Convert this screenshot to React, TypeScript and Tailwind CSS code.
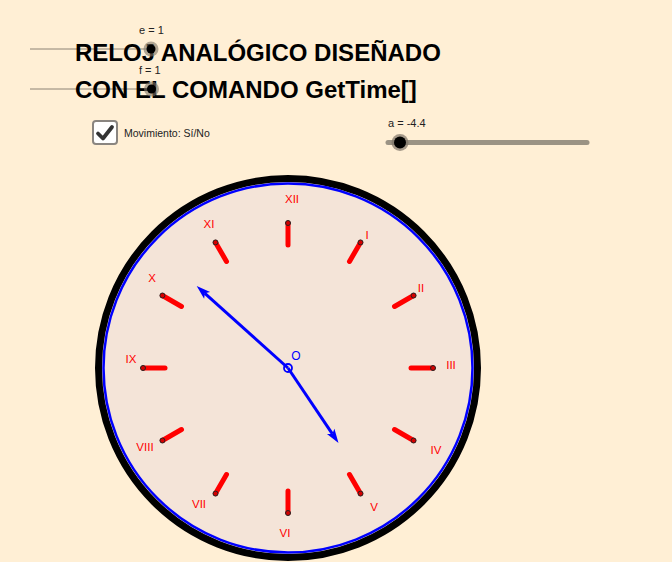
import React from "react";

const cx = 288;
const cy = 368;

const labels: [string, number, number][] = [
  ["XII", 292, 199],
  ["I", 367, 235],
  ["II", 421, 288],
  ["III", 451, 365],
  ["IV", 436, 450],
  ["V", 374, 507],
  ["VI", 285, 533],
  ["VII", 199, 504],
  ["VIII", 145, 447],
  ["IX", 131, 359],
  ["X", 152, 278],
  ["XI", 209, 224],
];

function Hand({ tx, ty }: { tx: number; ty: number }) {
  const dx = tx - cx;
  const dy = ty - cy;
  const len = Math.hypot(dx, dy);
  const ux = dx / len;
  const uy = dy / len;
  const L = 14;
  const W = 9;
  const bx = tx - ux * L;
  const by = ty - uy * L;
  const px = -uy;
  const py = ux;
  const pts = `${tx},${ty} ${bx + (px * W) / 2},${by + (py * W) / 2} ${bx + ux * 3},${by + uy * 3} ${bx - (px * W) / 2},${by - (py * W) / 2}`;
  return (
    <g>
      <line x1={cx} y1={cy} x2={bx + ux * 3} y2={by + uy * 3} stroke="#0000ff" strokeWidth={3} />
      <polygon points={pts} fill="#0000ff" />
    </g>
  );
}

export default function App() {
  const ticks = Array.from({ length: 12 }, (_, i) => {
    const a = (i * Math.PI) / 6;
    const s = Math.sin(a);
    const c = Math.cos(a);
    return {
      x1: cx + 145 * s,
      y1: cy - 145 * c,
      x2: cx + 123 * s,
      y2: cy - 123 * c,
    };
  });

  return (
    <div className="relative w-[672px] h-[562px] overflow-hidden bg-[#ffefd5] font-['Liberation_Sans',Arial,sans-serif]">
      <svg className="absolute left-0 top-0" width={672} height={562} viewBox="0 0 672 562">
        {/* sliders e, f */}
        <line x1={30} y1={49} x2={151} y2={49} stroke="#8c8274" strokeWidth={1} />
        <line x1={30} y1={89} x2={151} y2={89} stroke="#8c8274" strokeWidth={1} />
        {/* slider a */}
        <line x1={388} y1={142.5} x2={587} y2={142.5} stroke="#9b9384" strokeWidth={5} strokeLinecap="round" />
        <circle cx={400} cy={142.5} r={8.5} fill="#7d7468" opacity={0.7} />
        <circle cx={400} cy={142.5} r={6} fill="#000" />

        {/* clock */}
        <circle cx={cx} cy={cy} r={189.5} fill="none" stroke="#000" strokeWidth={7} />
        <circle cx={cx} cy={cy} r={184.5} fill="#f4e4d8" stroke="#0000ff" strokeWidth={2.5} />
        {ticks.map((t, i) => (
          <g key={i}>
            <line x1={t.x1} y1={t.y1} x2={t.x2} y2={t.y2} stroke="#ff0000" strokeWidth={5} strokeLinecap="round" />
            <circle cx={t.x1} cy={t.y1} r={2.5} fill="#d40000" stroke="#222" strokeWidth={1} />
          </g>
        ))}
        {labels.map(([t, x, y]) => (
          <text
            key={t}
            x={x}
            y={y + 4}
            textAnchor="middle"
            fontSize={11.5}
            fill="#ff0000"
            fontFamily="'Liberation Sans', Arial, sans-serif"
          >
            {t}
          </text>
        ))}
        <Hand tx={196.7} ty={286} />
        <Hand tx={338.5} ty={443} />
        <circle cx={cx} cy={cy} r={4} fill="none" stroke="#0000ff" strokeWidth={1.8} />
        <text x={296} y={359.5} textAnchor="middle" fontSize={12} fill="#0000ff" fontFamily="'Liberation Sans', Arial, sans-serif">
          O
        </text>
      </svg>

      {/* title */}
      <div className="absolute left-[75px] top-[41px] flex flex-col gap-[13px] text-[24px] leading-[24px] font-bold text-black whitespace-nowrap">
        <div>RELOJ ANALÓGICO DISEÑADO</div>
        <div>CON EL COMANDO GetTime[]</div>
      </div>

      {/* slider points over title */}
      <svg className="absolute left-0 top-0 pointer-events-none" width={200} height={100}>
        <circle cx={151} cy={49} r={7.5} fill="#7d7468" opacity={0.6} />
        <circle cx={151} cy={49} r={4.5} fill="#000" />
        <circle cx={151.5} cy={89} r={7.5} fill="#7d7468" opacity={0.6} />
        <circle cx={151.5} cy={89} r={4.5} fill="#000" />
      </svg>

      <div className="absolute left-[139px] top-[25px] text-[11px] leading-[11px] text-[#222]">e = 1</div>
      <div className="absolute left-[139px] top-[65px] text-[11px] leading-[11px] text-[#222]">f = 1</div>
      <div className="absolute left-[388px] top-[117px] text-[11px] leading-[12px] text-[#222]">a = -4.4</div>

      {/* checkbox */}
      <div className="absolute left-[92px] top-[120px] flex items-center gap-[6px]">
        <div className="w-[26px] h-[25px] rounded-[4px] border-2 border-[#8a8580] bg-white flex items-center justify-center">
          <svg width={20} height={18} viewBox="0 0 20 18">
            <path d="M3 9.5 L8 14.5 L17 3" fill="none" stroke="#333" strokeWidth={3.8} strokeLinecap="round" strokeLinejoin="round" />
          </svg>
        </div>
        <span className="text-[10.5px] leading-[12px] text-[#222]">Movimiento: Sí/No</span>
      </div>
    </div>
  );
}
